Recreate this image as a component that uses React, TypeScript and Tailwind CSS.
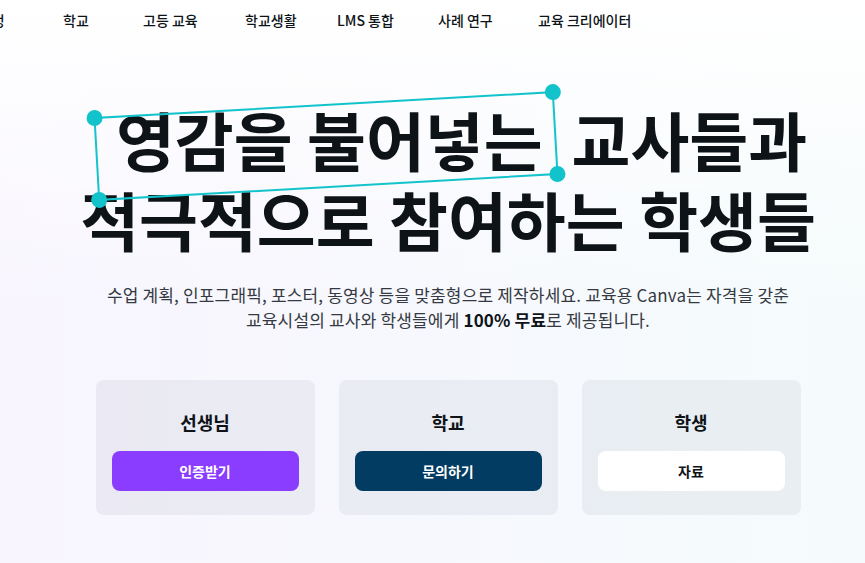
import React from "react";

const font = { fontFamily: '"Noto Sans CJK KR", "Noto Sans", sans-serif' };

const navItems = [
    { label: "학교", w: "w-[80px]" },
    { label: "고등 교육", w: "w-[102px]" },
    { label: "학교생활", w: "w-[92px]" },
    { label: "LMS 통합", w: "w-[101px]" },
    { label: "사례 연구", w: "w-[100px]" },
    { label: "교육 크리에이터", w: "" },
];

const cards = [
    { title: "선생님", cta: "인증받기", btn: "bg-[#8b3dff] text-white" },
    { title: "학교", cta: "문의하기", btn: "bg-[#033c62] text-white" },
    { title: "학생", cta: "자료", btn: "bg-white text-[#0e1318]" },
];

export default function App() {
    return (
        <main
            style={font}
            className="min-h-screen h-[563px] overflow-hidden text-[#0e1318] bg-[linear-gradient(to_bottom,#ffffff_0%,rgba(255,255,255,0)_55%),linear-gradient(to_right,#f8f5fe,#f5fbfc)]"
        >
            {/* Top nav, scrolled sideways */}
            <nav className="h-10 flex items-center text-[14px] font-medium whitespace-nowrap">
                <span className="w-[63px] shrink-0 flex">
                    <span className="-ml-[50px]">교육 과정</span>
                </span>
                {navItems.map((item) => (
                    <span key={item.label} className={`shrink-0 ${item.w}`}>
                        {item.label}
                    </span>
                ))}
            </nav>

            <section className="pl-[31px] flex flex-col items-center">
                {/* Headline */}
                <h1 className="mt-[58px] text-center text-[64px] leading-[80px] font-bold whitespace-nowrap">
                    <span className="relative inline-block ml-[27px] mr-[29px]">
                        영감을 불어넣는
                        <span className="absolute left-[calc(50%-3px)] top-[calc(50%+8px)] w-[461px] h-[84px] -translate-x-1/2 -translate-y-1/2 -rotate-[3.24deg] border-2 border-[#13c3cc] pointer-events-none">
                            <span className="absolute -left-[9px] -top-[9px] w-4 h-4 rounded-full bg-[#13c3cc]" />
                            <span className="absolute -right-[9px] -top-[9px] w-4 h-4 rounded-full bg-[#13c3cc]" />
                            <span className="absolute -left-[9px] -bottom-[9px] w-4 h-4 rounded-full bg-[#13c3cc]" />
                            <span className="absolute -right-[9px] -bottom-[9px] w-4 h-4 rounded-full bg-[#13c3cc]" />
                        </span>
                    </span>
                    교사들과
                    <br />
                    적극적으로 참여하는 학생들
                </h1>

                {/* Subtitle */}
                <p className="mt-[24px] text-center text-[17px] leading-[25px] tracking-[0.01em] text-[#353a42]">
                    수업 계획, 인포그래픽, 포스터, 동영상 등을 맞춤형으로 제작하세요. 교육용 Canva는 자격을 갖춘
                    <br />
                    교육시설의 교사와 학생들에게 <b className="font-bold text-[#0e1318]">100% 무료</b>로 제공됩니다.
                </p>

                {/* Audience cards */}
                <div className="mt-[48px] flex gap-6">
                    {cards.map((c) => (
                        <div
                            key={c.title}
                            className="w-[219px] h-[135px] rounded-lg bg-[rgba(64,87,109,0.07)] flex flex-col items-center px-4 pt-[28px]"
                        >
                            <h2 className="text-[18px] leading-7 font-bold">{c.title}</h2>
                            <button className={`mt-[15px] w-full h-10 rounded-lg text-[14px] font-bold ${c.btn}`}>
                                {c.cta}
                            </button>
                        </div>
                    ))}
                </div>
            </section>
        </main>
    );
}
